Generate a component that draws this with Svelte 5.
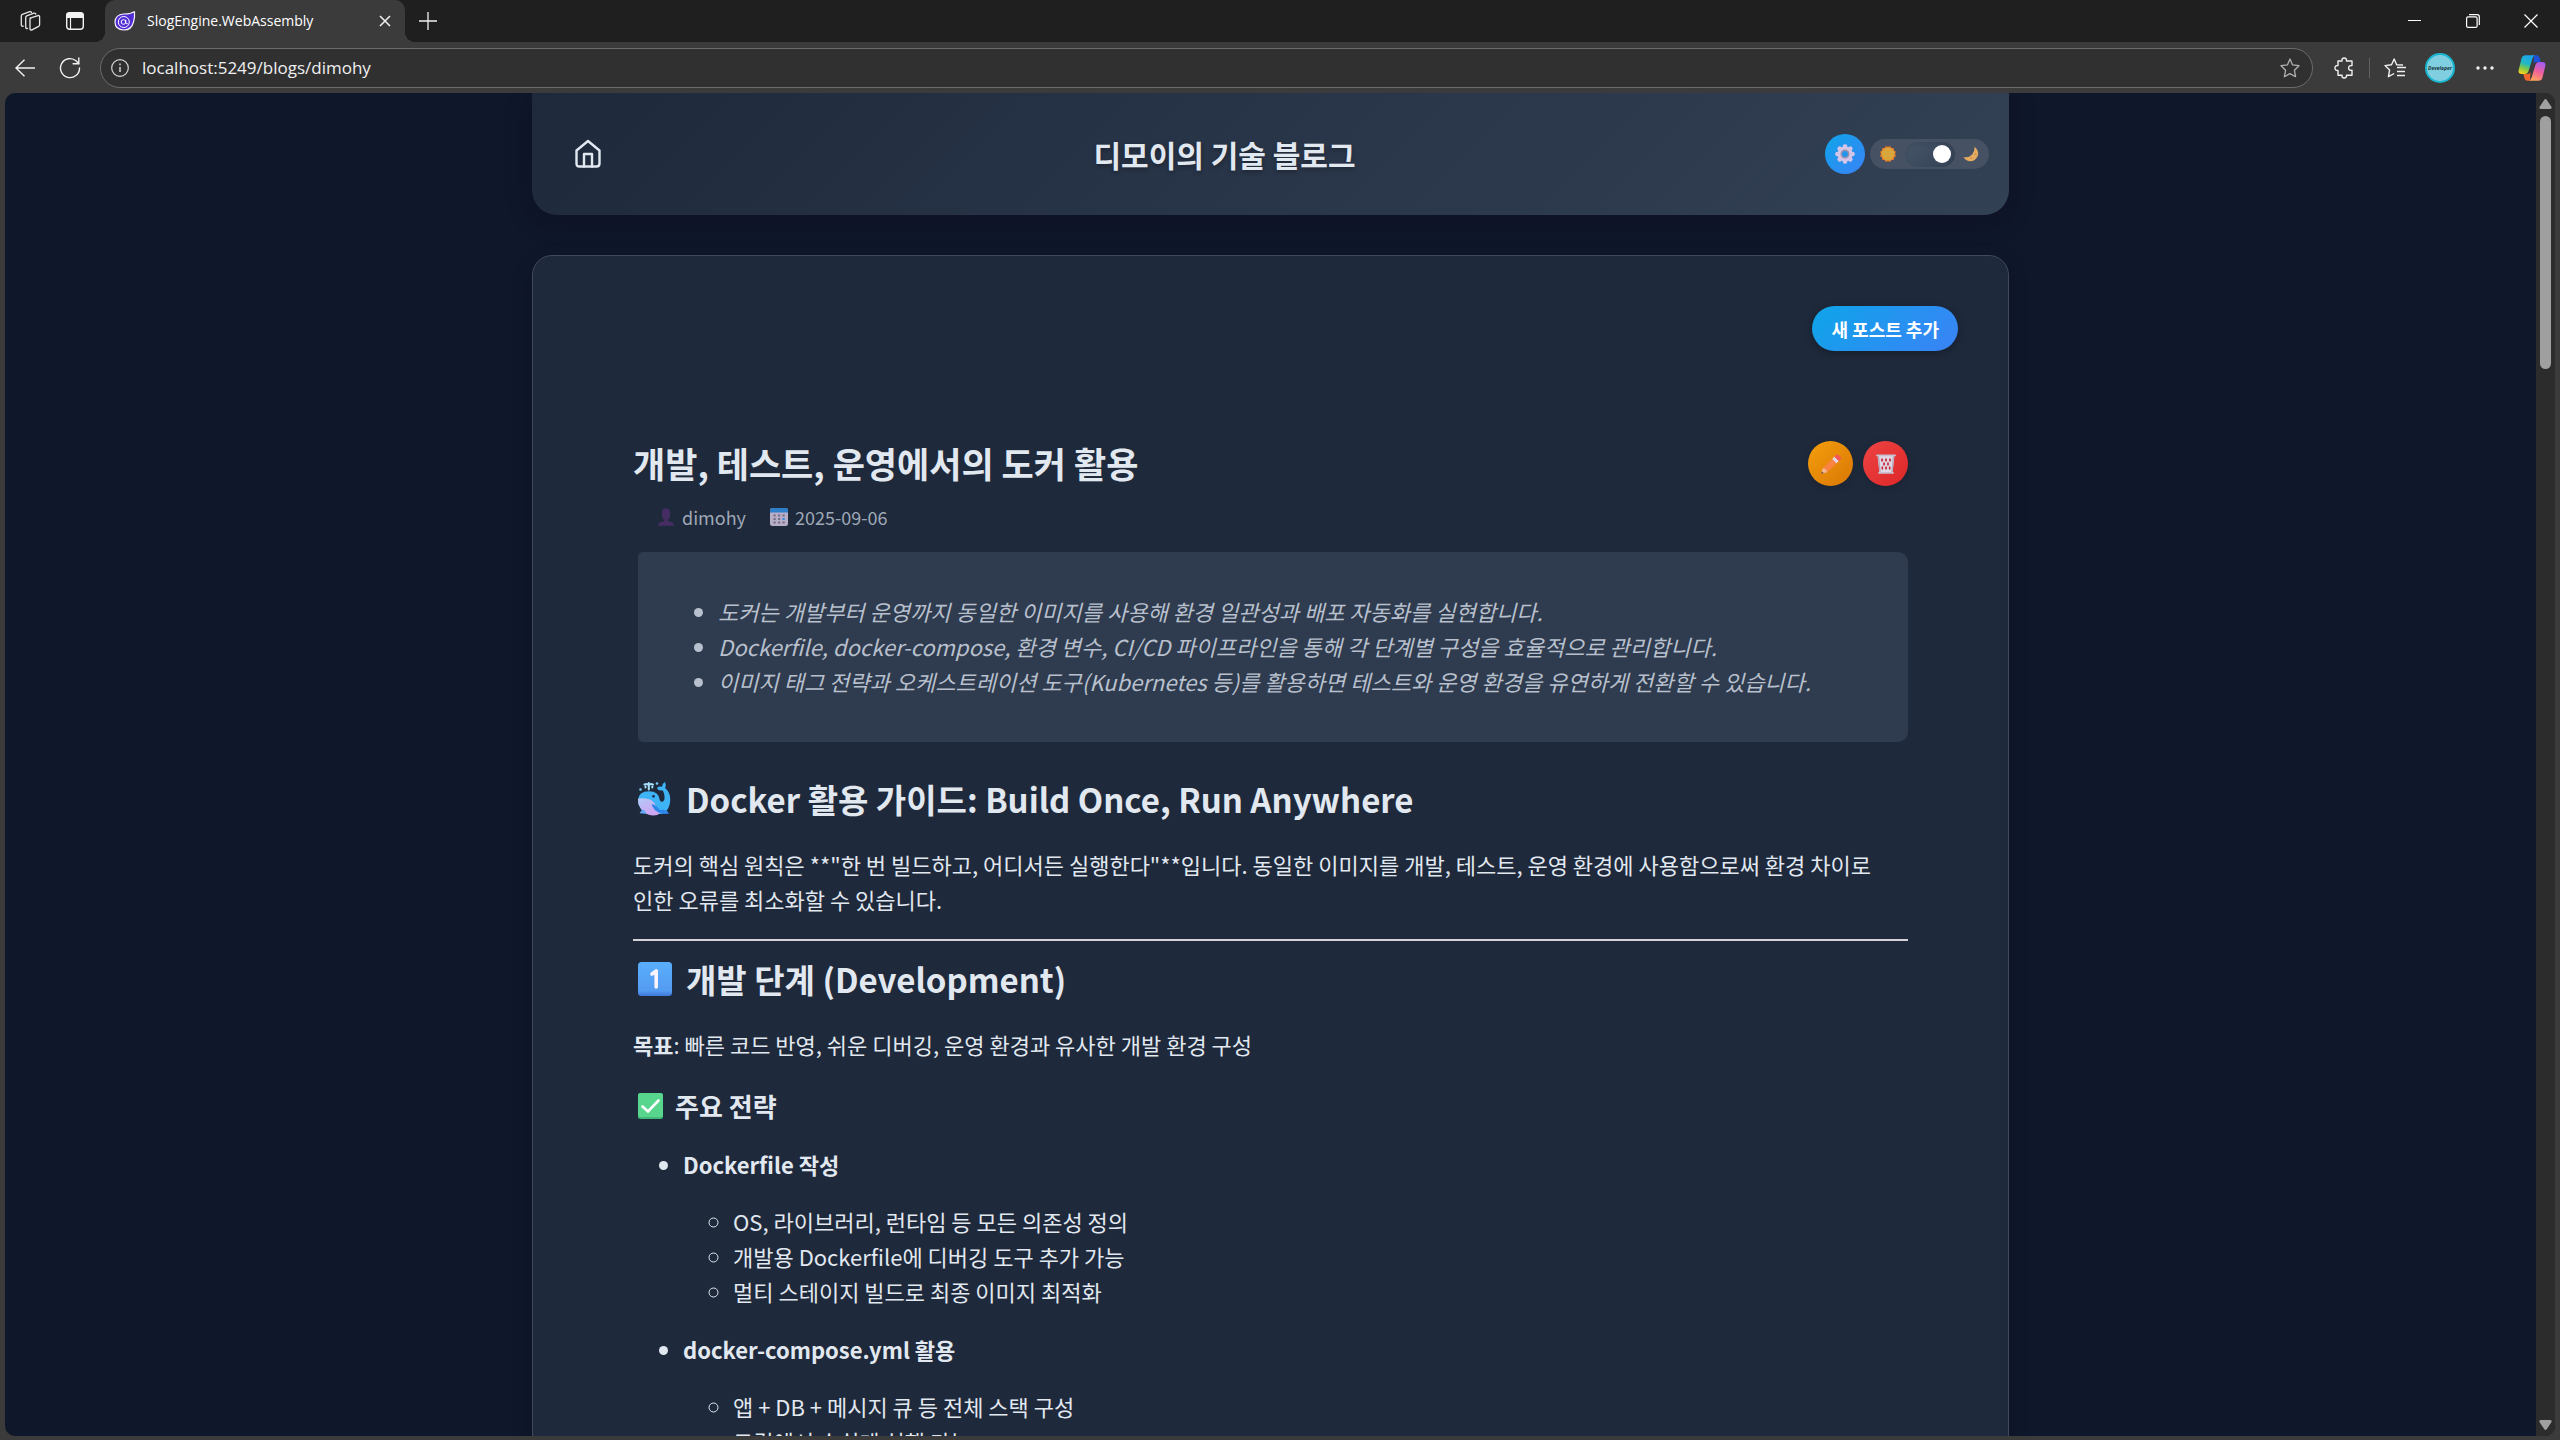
<script lang="ts">
  type Section = {
    title: string;
    items: string[];
  };

  let address = $state('localhost:5249/blogs/dimohy');
  let darkMode = $state(true);

  const tabTitle = 'SlogEngine.WebAssembly';
  const blogTitle = '디모이의 기술 블로그';

  const post = {
    title: '개발, 테스트, 운영에서의 도커 활용',
    author: 'dimohy',
    date: '2025-09-06',
    summary: [
      '도커는 개발부터 운영까지 동일한 이미지를 사용해 환경 일관성과 배포 자동화를 실현합니다.',
      'Dockerfile, docker-compose, 환경 변수, CI/CD 파이프라인을 통해 각 단계별 구성을 효율적으로 관리합니다.',
      '이미지 태그 전략과 오케스트레이션 도구(Kubernetes 등)를 활용하면 테스트와 운영 환경을 유연하게 전환할 수 있습니다.',
    ],
  };

  const strategies: Section[] = [
    {
      title: 'Dockerfile 작성',
      items: [
        'OS, 라이브러리, 런타임 등 모든 의존성 정의',
        '개발용 Dockerfile에 디버깅 도구 추가 가능',
        '멀티 스테이지 빌드로 최종 이미지 최적화',
      ],
    },
    {
      title: 'docker-compose.yml 활용',
      items: ['앱 + DB + 메시지 큐 등 전체 스택 구성', '로컬에서 손쉽게 실행 가능'],
    },
  ];
</script>

<div class="browser">
  <div class="tab-strip">
    <button class="strip-button" aria-label="Workspaces">
      <svg width="22" height="22" viewBox="0 0 22 22" fill="none" stroke="#e6e6e6" stroke-width="1.3" stroke-linejoin="round" stroke-linecap="round">
        <path d="M11 8.2 19 5.6q1.6-.4 1.6 1.2v8q0 1.2-1 1.6l-6.600 3.400q-1.800.7-2-1V9.800q0-1.200 1-1.600z" />
        <path d="M8.600 18.400q-1.800.5-1.900-1.200V7.600q0-1.200 1-1.700l7.300-2.700q1.200-.3 1.800.9" />
        <path d="M4.300 16.200q-2 .3-2-1.400V6q0-1.200 1-1.700l7.500-2.700q1.200-.3 1.800.8" />
      </svg>
    </button>
    <button class="strip-button" aria-label="Tab actions">
      <svg width="20" height="20" viewBox="0 0 20 20">
        <rect x="1.700" y="1.700" width="16.600" height="16.600" rx="3" fill="none" stroke="#f2f2f2" stroke-width="1.400" />
        <path d="M1.200 7V4.500Q1.200 1.200 4.500 1.200h11q3.300 0 3.300 3.300V7z" fill="#f2f2f2" />
        <path d="M5.500 7v11" stroke="#f2f2f2" stroke-width="1.200" />
      </svg>
    </button>
    <div class="tab">
      <svg class="favicon" width="22" height="20" viewBox="0 0 22 20">
        <path d="M20.500.8Q21 6 19.500 11q-2 8-9.500 8Q1 18.600 1 11 1.500 3.500 9.500 3q5 0 7-.8 2.500-1.200 4-1.400z" fill="#512bd4" stroke="#f4f0ff" stroke-width="1.200" />
        <circle cx="9.800" cy="11" r="5.500" fill="none" stroke="#fff" stroke-width="1" />
        <circle cx="9.500" cy="11" r="2.300" fill="none" stroke="#fff" stroke-width="1" />
        <path d="M11.800 8.800v3q.5 1.600 2 .8" fill="none" stroke="#fff" />
      </svg>
      <span class="tab-title">{tabTitle}</span>
      <button class="tab-close" aria-label="Close tab">
        <svg width="12" height="12" viewBox="0 0 12 12" stroke="#f2f2f2" stroke-width="1.500"><path d="m1 1 10 10M11 1 1 11" /></svg>
      </button>
    </div>
    <button class="strip-button" aria-label="New tab">
      <svg width="18" height="18" viewBox="0 0 18 18" stroke="#f2f2f2" stroke-width="1.300"><path d="M9 0v18M0 9h18" /></svg>
    </button>
    <div class="window-controls">
      <button aria-label="Minimize">
        <svg width="14" height="14" viewBox="0 0 14 14" stroke="#fff"><path d="M0 6.500h13" /></svg>
      </button>
      <button aria-label="Restore">
        <svg width="14" height="14" viewBox="0 0 14 14" fill="none" stroke="#fff" stroke-width="1.200">
          <rect x=".6" y="2.900" width="10.500" height="10.500" rx="1.500" />
          <path d="M3 .7h8.200q2.100 0 2.100 2.100V11" />
        </svg>
      </button>
      <button aria-label="Close">
        <svg width="14" height="14" viewBox="0 0 14 14" stroke="#fff" stroke-width="1.200"><path d="m.5.5 13 13M13.500.5l-13 13" /></svg>
      </button>
    </div>
  </div>

  <div class="toolbar">
    <div class="nav-buttons">
      <button class="nav-button" aria-label="Back">
        <svg width="20" height="18" viewBox="0 0 20 18" fill="none" stroke="#f2f2f2" stroke-width="1.400"><path d="M20 9H1M9.500.8 1 9l8.500 8.200" /></svg>
      </button>
      <button class="nav-button" aria-label="Reload">
        <svg width="22" height="22" viewBox="0 0 22 22" fill="none" stroke="#f2f2f2" stroke-width="1.400" stroke-linecap="round">
          <path d="M20.500 11A9.500 9.500 0 1 1 17.300 4L19.500 6.500" />
          <path d="M19.800 1v5.700h-5.700" />
        </svg>
      </button>
    </div>
    <div class="address-bar">
      <svg width="18" height="18" viewBox="0 0 18 18" fill="none" stroke="#d6d6d6" stroke-width="1.200">
        <circle cx="9" cy="9" r="8.300" />
        <path d="M9 8v5M9 4.600v1.600" stroke-width="1.500" />
      </svg>
      <input bind:value={address} type="text" aria-label="Address" spellcheck="false" />
      <button class="favorite" aria-label="Add to favorites">
        <svg width="20" height="20" viewBox="0 0 20 20" fill="none" stroke="#b0b0b0" stroke-width="1.300" stroke-linejoin="round">
          <path d="m10 1 2.600 5.900 6.400.8-4.600 4.500 1.200 6.500L10 15.600l-5.600 3.100 1.200-6.500L1 7.700l6.400-.8z" />
        </svg>
      </button>
    </div>
    <div class="toolbar-actions">
      <button aria-label="Extensions">
        <svg width="20" height="22" viewBox="0 0 20 22" fill="none" stroke="#f0f0f0" stroke-width="1.400" stroke-linejoin="round">
          <path d="M4 4h4q-.4-3 2.200-3t2.300 3H18v4.500q-3.400-.3-3.400 2.400T18 13.300v4.900h-5.500q.3 2.800-2.300 2.800T8 18.200H4v-4.700q-3 .3-3-2.500t3-2.500z" />
        </svg>
      </button>
      <span class="divider"></span>
      <button aria-label="Favorites">
        <svg width="22" height="20" viewBox="0 0 22 20" fill="none" stroke="#f0f0f0" stroke-width="1.400" stroke-linejoin="round">
          <path d="M19 7 12.600 6.700 10.200 1 7.500 6.700 1 7.600l4.600 4.500-1.200 6.600 5.800-3.200" />
          <path d="M13 9.500h9M13 13.500h8M13 17.500h8" />
        </svg>
      </button>
      <button aria-label="Profile"><span class="avatar">Developer</span></button>
      <button aria-label="Settings and more">
        <svg width="18" height="4" viewBox="0 0 18 4" fill="#f2f2f2"><circle cx="2" cy="2" r="1.700" /><circle cx="9" cy="2" r="1.700" /><circle cx="16" cy="2" r="1.700" /></svg>
      </button>
      <button class="copilot" aria-label="Copilot">
        <svg width="30" height="28" viewBox="0 0 30 28">
          <defs>
            <linearGradient id="cool" x1=".6" y1="0" x2=".3" y2="1">
              <stop offset="0" stop-color="#1ba4ee" />
              <stop offset=".45" stop-color="#22b8c4" />
              <stop offset=".7" stop-color="#79c84a" />
              <stop offset="1" stop-color="#f6d21c" />
            </linearGradient>
            <linearGradient id="warm" x1=".7" y1="0" x2=".3" y2="1">
              <stop offset="0" stop-color="#a45cf0" />
              <stop offset=".5" stop-color="#f0609b" />
              <stop offset="1" stop-color="#ffa45c" />
            </linearGradient>
          </defs>
          <path d="M17 1.300h2.500q2.300 0 3 2.300l1.200 4.400h-4.500q-2 0-2.700 2z" fill="#1c51d8" />
          <path d="M13 26.700h-2.500q-2.300 0-3-2.300L6.300 20h4.500q2 0 2.700-2z" fill="#f0642e" />
          <path d="M8.200 1.300h9.600q-1.600.8-2.300 3L11.600 17q-1 3-3.700 3H4.600q-4 0-2.800-4.400L4.600 4q.9-2.700 3.600-2.700z" fill="url(#cool)" />
          <path d="M21.800 26.700h-9.600q1.600-.8 2.300-3L18.400 11q1-3 3.700-3h3.300q4 0 2.800 4.400L25.400 24q-.9 2.700-3.600 2.700z" fill="url(#warm)" />
        </svg>
      </button>
    </div>
  </div>

  <div class="viewport">
    <div class="page">
      <header class="blog-header">
        <a class="home" href="/" aria-label="Home">
          <svg width="28" height="30" viewBox="0 0 28 30" fill="none" stroke="#e2e8f0" stroke-width="2.400" stroke-linejoin="round" stroke-linecap="round">
            <path d="M2.500 11.500 14 2l11.500 9.500v13q0 3-3 3h-17q-3 0-3-3z" />
            <path d="M10 27.500V15h8v12.500" />
          </svg>
        </a>
        <h1>{blogTitle}</h1>
        <div class="header-actions">
          <button class="settings" aria-label="설정">
            <svg width="20" height="20" viewBox="0 0 20 20">
              <g fill="#d4c5e8">
                {#each [0, 45, 90, 135] as angle}
                  <rect x="7.800" y=".3" width="4.400" height="19.400" rx="1.800" transform="rotate({angle} 10 10)" />
                {/each}
                <circle cx="10" cy="10" r="7.500" />
              </g>
              <circle cx="10" cy="10" r="3.700" fill="#2196ef" stroke="#9b93ab" stroke-width="1.600" />
            </svg>
          </button>
          <label class="theme">
            <svg width="16" height="16" viewBox="0 0 16 16">
              {#each [0, 30, 60] as angle}
                <rect x="2" y="2" width="12" height="12" rx="1" fill="#e2782a" transform="rotate({angle} 8 8)" />
              {/each}
              <circle cx="8" cy="8" r="6.500" fill="#d9a63c" />
            </svg>
            <input type="checkbox" aria-label="다크 모드" bind:checked={darkMode} />
            <svg width="16" height="16" viewBox="0 0 16 16">
              <path d="M11.500.7q5 4.300 3.200 9.300-2.400 5.400-8 5.200-4-.3-6.200-4.200 5.500.9 8.700-2.500 2.700-3.300 2.300-7.800z" fill="#e5ac61" />
              <circle cx="12.500" cy="8" r="1" fill="#cf8d4a" /><circle cx="8" cy="12" r="1" fill="#cf8d4a" />
            </svg>
          </label>
        </div>
      </header>

      <main class="card">
        <div class="add-row">
          <button class="add-post">새 포스트 추가</button>
        </div>

        <article>
          <div class="post-head">
            <h2 class="post-title">{post.title}</h2>
            <div class="post-actions">
              <button class="edit" aria-label="수정">
                <svg width="20" height="20" viewBox="0 0 20 20">
                  <path d="M1.800 14.200 12 4.300l4.300 4.200L6 18.300.400 19.600z" fill="#f98445" />
                  <path d="M1.800 14.200.300 19.600 6 18.300q-.3-3.500-4.200-4.100z" fill="#f3b892" />
                  <path d="m.9 17.400-.6 2.300 2.300-.6z" fill="#4a3a44" />
                  <path d="m11.300 5 2.200-2.200 4.300 4.300-2.200 2.200z" fill="#dfd9ee" />
                  <path d="M13.500 2.800 15.300 1q1.200-.9 2.300.2l1.800 1.700q1.200 1.300.1 2.400l-1.700 1.800z" fill="#f9535c" />
                </svg>
              </button>
              <button class="delete" aria-label="삭제">
                <svg width="20" height="20" viewBox="0 0 20 20">
                  <path d="M1.500 1.500h17l-2 17.500h-13z" fill="#e0d9e6" />
                  <g fill="#c92c40">
                    <path d="m6 3.800 1.200 2.200L6 8.200 4.800 6zM10 3.800 11.200 6 10 8.200 8.800 6zM14 3.800 15.200 6 14 8.200 12.800 6z" />
                    <path d="m8 7.700 1.200 2.300L8 12.300 6.800 10zM12 7.700l1.200 2.300-1.200 2.300-1.200-2.300z" />
                    <path d="m6.300 11.800 1.100 2.200-1.100 2.200L5.200 14zM10 11.800l1.200 2.200-1.200 2.200L8.800 14zM13.700 11.800l1.100 2.200-1.100 2.200-1.100-2.200z" />
                  </g>
                  <path d="m2.500 2 1.600 16.500M17.500 2l-1.600 16.500" stroke="#b3aabf" stroke-width="1.400" />
                  <path d="M1 1.300h18M3 18.900h14" stroke="#c8c0d0" stroke-width="1.800" stroke-linecap="round" />
                </svg>
              </button>
            </div>
          </div>

          <div class="meta">
            <span>
              <svg width="18" height="18" viewBox="0 0 18 18" fill="#452c63">
                <path d="M9 .2q4 0 4 4.300v4q-.6 2.700-2.200 3v1.700q5.700.4 6.500 4.600H.7q.8-4.200 6.500-4.600v-1.700q-1.600-.3-2.200-3v-4Q5 .2 9 .2z" />
              </svg>
              {post.author}
            </span>
            <span>
              <svg width="18" height="18" viewBox="0 0 18 18">
                <rect width="18" height="18" rx="2.500" fill="#b7aec8" />
                <path d="M0 4.500V2.500Q0 0 2.500 0h13Q18 0 18 2.500v2z" fill="#2e7fc9" />
                <path d="M3.500 7.500h2.200M8 7.500h2.200M12.500 7.500h2.200M3.500 11h2.200M8 11h2.200M3.500 14.500h2.200M8 14.500h2.200M12.500 14.500h2.200" stroke="#766c8a" stroke-width="2" />
                <path d="M12.500 11h2.200" stroke="#2f8bd6" stroke-width="2" />
              </svg>
              {post.date}
            </span>
          </div>

          <blockquote>
            <ul>
              {#each post.summary as line}
                <li>{line}</li>
              {/each}
            </ul>
          </blockquote>

          <h2>
            <svg width="34" height="34" viewBox="0 0 34 34">
              <defs>
                <linearGradient id="belly" x2=".5" y2="1">
                  <stop offset="0" stop-color="#b4c9f8" />
                  <stop offset="1" stop-color="#cfa5f2" />
                </linearGradient>
              </defs>
              <path d="M0 18Q.5 9.500 11 9.300q9.500.2 10.500 8 .8 3.200 3.200 2.400 3-1.800 1.300-8.200Q25.300 9 24.500 8.300 20.500 9.300 18.800 6q2.500-2 5.200-1.200Q24.300 1.300 27 0q1.700 3.600.2 6.300 4.300 3.200 5 9.700.3 7.500-3.400 12.500L24 32H8q-4-2-6-6.500Q0 22 0 18z" fill="#3eb4f6" />
              <path d="M.2 16.500q6-.5 11 .8 5.300 2 6.800 7.200 1 4 3.800 7-2.300 2-6.300 2-5.500 0-8.500-3Q2.500 27.500.8 23-.2 20 .2 16.500z" fill="url(#belly)" />
              <path d="M5.500 27.500q-2.500.8-4 3.700l5.700.6q1.300-2-1.700-4.300z" fill="#63a9f7" />
              <path d="M13.500 22q5 1 8.500 6l4-.3q3.300.8 5.300 3.800-4.800 1-8.800-.3Q15.500 29 13.500 22z" fill="#2f86ea" />
              <circle cx="15.500" cy="14.300" r="1.400" fill="#1d2f55" />
              <path d="M10.800 7.500V3.500Q9.500 1 6.500 2.500M10.800 3.500Q12.500 1 15 2.500M10.800 1v3M7.500 4.500v1M14.300 4.500v1" fill="none" stroke="#a5defa" stroke-width="2" stroke-linecap="round" />
              <circle cx="2.500" cy="7.500" r="1.300" fill="#7cc9f5" />
              <circle cx="19" cy="1.500" r="1.300" fill="#7cc9f5" />
            </svg>
            Docker 활용 가이드: Build Once, Run Anywhere
          </h2>
          <p>도커의 핵심 원칙은 **"한 번 빌드하고, 어디서든 실행한다"**입니다. 동일한 이미지를 개발, 테스트, 운영 환경에 사용함으로써 환경 차이로 인한 오류를 최소화할 수 있습니다.</p>
          <hr />
          <h2 class="after-rule">
            <svg width="34" height="34" viewBox="0 0 34 34">
              <defs>
                <linearGradient id="keycap" x2="0" y2="1">
                  <stop offset="0" stop-color="#5aaefb" />
                  <stop offset=".85" stop-color="#549bf2" />
                  <stop offset="1" stop-color="#3f78d8" />
                </linearGradient>
              </defs>
              <rect width="34" height="34" rx="3.500" fill="url(#keycap)" />
              <path d="m14 12 4.200-3v16" fill="none" stroke="#fdf4ff" stroke-width="3.600" stroke-linecap="round" stroke-linejoin="round" />
            </svg>
            개발 단계 (Development)
          </h2>
          <p><strong>목표</strong>: 빠른 코드 반영, 쉬운 디버깅, 운영 환경과 유사한 개발 환경 구성</p>
          <h3>
            <svg width="25" height="26" viewBox="0 0 25 26">
              <rect width="25" height="26" rx="2.500" fill="#42b978" />
              <rect width="25" height="24" rx="2.500" fill="#58d68d" />
              <path d="m4.500 13.500 5.500 5L20.500 7.500" fill="none" stroke="#fff" stroke-width="2.600" stroke-linecap="round" />
            </svg>
            주요 전략
          </h3>
          <ul class="strategies">
            {#each strategies as strategy}
              <li>
                <p><strong>{strategy.title}</strong></p>
                <ul>
                  {#each strategy.items as item}
                    <li>{item}</li>
                  {/each}
                </ul>
              </li>
            {/each}
          </ul>
        </article>
      </main>
    </div>

    <div class="scrollbar">
      <svg width="13" height="10" viewBox="0 0 13 10" fill="#a0a0a0"><path d="M5.300.7q1.200-1.300 2.400 0l4.800 7.300q.7 1.700-1.200 2H1.700Q-.2 9.700.5 8z" /></svg>
      <div class="thumb"></div>
      <svg class="down" width="13" height="10" viewBox="0 0 13 10" fill="#a0a0a0"><path d="M5.300 9.300q1.200 1.300 2.400 0L12.500 2q.7-1.700-1.200-2H1.700Q-.2.300.5 2z" /></svg>
    </div>
  </div>
</div>

<style>
  :global(body) {
    background: #3b3b3b;
  }

  .browser {
    height: 100vh;
    display: flex;
    flex-direction: column;
    overflow: hidden;
    background: #3b3b3b;
    color: #fff;
    font-family: "Open Sans", "Noto Sans", sans-serif;
  }

  button {
    display: flex;
    align-items: center;
    justify-content: center;
    padding: 0;
    border: none;
    background: none;
    color: inherit;
    font-family: inherit;
    cursor: pointer;
  }

  svg {
    flex: none;
    display: block;
  }

  /* browser frame */
  .tab-strip {
    flex: none;
    display: flex;
    height: 42px;
    padding-left: 7px;
    background: #1f1f1f;
  }
  .strip-button {
    width: 45px;
    height: 41px;
  }
  .tab {
    position: relative;
    display: flex;
    align-items: center;
    width: 300px;
    margin-left: 8px;
    padding: 0 8px 0 9px;
    box-sizing: border-box;
    border-radius: 10px 10px 0 0;
    background: #3b3b3b;
  }
  .tab::before,
  .tab::after {
    content: "";
    position: absolute;
    bottom: 0;
    width: 10px;
    height: 10px;
  }
  .tab::before {
    right: 100%;
    background: radial-gradient(circle at 0 0, #1f1f1f 10px, #3b3b3b 10px);
  }
  .tab::after {
    left: 100%;
    background: radial-gradient(circle at 100% 0, #1f1f1f 10px, #3b3b3b 10px);
  }
  .tab-title {
    flex: 1;
    margin-left: 11px;
    font-size: 14px;
    line-height: 40px;
    white-space: nowrap;
  }
  .tab-close {
    width: 24px;
    height: 24px;
  }
  .window-controls {
    display: flex;
    margin-left: auto;
  }
  .window-controls button {
    width: 58px;
    height: 42px;
  }
  .toolbar {
    flex: none;
    display: flex;
    align-items: center;
    height: 51px;
    padding: 0 8px 0 2px;
  }
  .nav-buttons {
    display: flex;
    width: 98px;
  }
  .nav-button {
    width: 45px;
    height: 40px;
  }
  .address-bar {
    flex: 1;
    display: flex;
    align-items: center;
    height: 40px;
    padding: 0 12px 0 10px;
    box-sizing: border-box;
    border: 1px solid #6b6b6b;
    border-radius: 20px;
    background: #303030;
  }
  .address-bar input {
    flex: 1;
    margin-left: 13px;
    padding: 0;
    border: none;
    outline: none;
    background: none;
    color: #f0f0f0;
    font-family: inherit;
    font-size: 17px;
  }
  .toolbar-actions {
    display: flex;
    align-items: center;
    gap: 5px;
    margin-left: 11px;
  }
  .toolbar-actions button {
    width: 40px;
    height: 40px;
  }
  .divider {
    width: 1px;
    height: 20px;
    background: #606060;
  }
  .avatar {
    width: 30px;
    height: 30px;
    box-sizing: border-box;
    border: 2px solid #1ab6cf;
    border-radius: 50%;
    background: #7fcfe0;
    color: #17343c;
    font-size: 5px;
    font-weight: 700;
    font-style: italic;
    line-height: 26px;
    text-align: center;
  }
  .toolbar-actions .copilot {
    margin-left: 2px;
  }

  .viewport {
    flex: 1;
    min-height: 0;
    display: flex;
    margin: 0 5px 4px;
    border-radius: 10px;
    overflow: hidden;
    background: #0f172a;
  }
  .scrollbar {
    flex: none;
    display: flex;
    flex-direction: column;
    align-items: center;
    width: 19px;
    padding: 6px 0;
    box-sizing: border-box;
    background: #2c2c2c;
  }
  .thumb {
    width: 11px;
    height: 19%;
    margin-top: 7px;
    border-radius: 6px;
    background: #9f9f9f;
  }
  .down {
    margin-top: auto;
  }

  /* blog */
  .page {
    flex: 1;
    min-width: 0;
    overflow: hidden;
    color: #e2e8f0;
    font-family: "Noto Sans CJK KR", "Noto Sans", sans-serif;
    font-size: 22px;
    line-height: 35px;
    word-break: keep-all;
  }
  .blog-header {
    display: flex;
    align-items: center;
    justify-content: space-between;
    max-width: 1477px;
    height: 122px;
    margin: 0 auto 40px;
    padding: 0 20px;
    box-sizing: border-box;
    border-radius: 0 0 25px 25px;
    background: linear-gradient(135deg, #1e293b, #334155);
    box-shadow: 0 5px 25px rgba(15, 10, 30, 0.4);
  }
  .home {
    display: flex;
    justify-content: center;
    width: 72px;
  }
  .blog-header h1 {
    margin: 0;
    font-size: 30px;
    line-height: 48px;
    text-shadow: 0 2px 4px rgba(0, 0, 0, 0.3);
  }
  .header-actions {
    display: flex;
    align-items: center;
    gap: 5px;
  }
  .settings {
    width: 40px;
    height: 40px;
    border-radius: 50%;
    background: linear-gradient(135deg, #0ea5e9, #3b82f6);
  }
  .theme {
    display: flex;
    align-items: center;
    justify-content: space-between;
    width: 119px;
    height: 30px;
    padding: 0 10px;
    box-sizing: border-box;
    border-radius: 15px;
    background: #465263;
  }
  .theme input {
    appearance: none;
    display: flex;
    align-items: center;
    width: 50px;
    height: 25px;
    margin: 0;
    padding: 0 4px;
    box-sizing: border-box;
    border-radius: 13px;
    background: linear-gradient(135deg, #475569, #334155);
    box-shadow: inset 0 2px 4px rgba(0, 0, 0, 0.1);
  }
  .theme input::before {
    content: "";
    width: 18px;
    height: 18px;
    border-radius: 50%;
    background: #fff;
  }
  .theme input:checked {
    justify-content: flex-end;
  }

  .card {
    max-width: 1477px;
    margin: 0 auto;
    padding: 50px;
    box-sizing: border-box;
    border: 1px solid #3f4a5a;
    border-radius: 20px;
    background: #1e293b;
    box-shadow: 0 5px 20px rgba(15, 10, 30, 0.2);
  }
  .add-row {
    display: flex;
    justify-content: flex-end;
    margin-bottom: 40px;
  }
  .add-post {
    height: 45px;
    padding: 0 19px;
    border-radius: 23px;
    background: linear-gradient(135deg, #0ea5e9, #3b82f6);
    box-shadow: 0 2px 8px rgba(0, 0, 0, 0.3);
    color: #fff;
    font-size: 18px;
    font-weight: 700;
    line-height: 26px;
  }
  article {
    padding: 50px;
  }
  .post-head {
    display: flex;
    align-items: flex-start;
    justify-content: space-between;
    height: 45px;
  }
  article .post-title {
    margin: 0;
    font-size: 35px;
    line-height: 43px;
  }
  .post-actions {
    display: flex;
    gap: 10px;
  }
  .post-actions button {
    width: 45px;
    height: 45px;
    border-radius: 50%;
    box-shadow: 0 2px 8px rgba(0, 0, 0, 0.15);
  }
  .edit {
    background: linear-gradient(135deg, #f59e0b, #d97706);
  }
  .delete {
    background: linear-gradient(135deg, #ef4444, #dc2626);
  }
  .meta {
    display: flex;
    gap: 24px;
    margin: 17px 0 21px;
    padding-left: 24px;
    color: #9fa8b6;
    font-size: 18px;
    line-height: 28px;
  }
  .meta span {
    display: flex;
    align-items: center;
    gap: 7px;
  }

  blockquote {
    margin: 0 0 30px 5px;
    padding: 42px 40px 43px;
    border-radius: 5px 10px 10px 5px;
    background: #2f3b4e;
    color: #b8c0cd;
    font-style: italic;
  }
  blockquote ul {
    margin: 0;
    padding-left: 40px;
  }

  article h2 {
    display: flex;
    align-items: center;
    gap: 14px;
    margin: 29px 0 20px;
    font-size: 33px;
    line-height: 54px;
  }
  article h2 svg,
  h3 svg {
    margin-left: 5px;
  }
  article .after-rule {
    margin-top: 11px;
  }
  article p {
    margin: 0;
  }
  hr {
    height: 2px;
    margin: 22px 0 0;
    border: none;
    background: #d3d3d5;
  }
  article h2 + p {
    margin-top: 21px;
  }
  h3 {
    display: flex;
    align-items: center;
    gap: 12px;
    margin: 23px 0 20px;
    font-size: 26px;
    line-height: 42px;
  }
  .strategies {
    margin: 0;
    padding-left: 50px;
  }
  .strategies ul {
    margin: 22px 0 23px;
    padding-left: 50px;
  }
</style>
